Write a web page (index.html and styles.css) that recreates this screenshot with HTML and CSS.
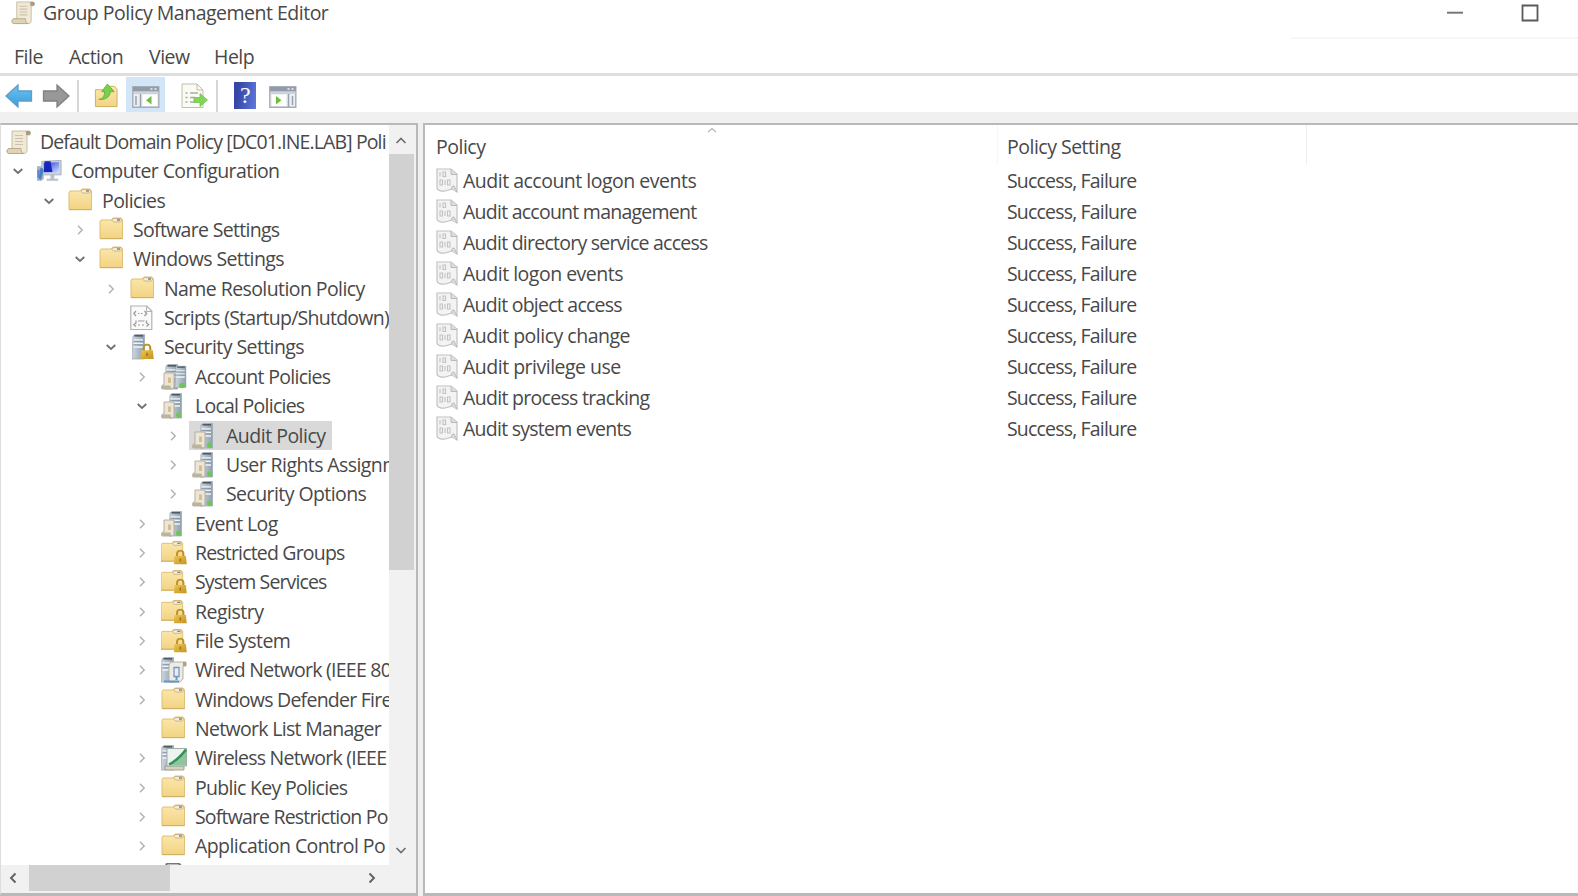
FILE: index.html
```html
<!DOCTYPE html>
<html lang="en">
<head>
<meta charset="utf-8">
<title>Group Policy Management Editor</title>
<link rel="stylesheet" href="styles.css">
</head>
<body>
<svg class="defs" aria-hidden="true">
  <defs>
    <linearGradient id="gFolder" x1="0" y1="0" x2="0" y2="1"><stop offset="0" stop-color="#fbe8ae"/><stop offset="1" stop-color="#f2d382"/></linearGradient>
    <linearGradient id="gServer" x1="0" y1="0" x2="1" y2="0"><stop offset="0" stop-color="#ced7df"/><stop offset="1" stop-color="#8d9fae"/></linearGradient>
    <linearGradient id="gLock" x1="0" y1="0" x2="1" y2="1"><stop offset="0" stop-color="#ecc552"/><stop offset="1" stop-color="#c4921c"/></linearGradient>
    <linearGradient id="gBlue" x1="0" y1="0" x2="0" y2="1"><stop offset="0" stop-color="#6cc3f3"/><stop offset="1" stop-color="#3a9cdb"/></linearGradient>
    <linearGradient id="gScreen" x1="0" y1="0" x2="1" y2="1"><stop offset="0" stop-color="#2236d2"/><stop offset="1" stop-color="#cfe0ff"/></linearGradient>
  </defs>
  <symbol id="scroll" viewBox="0 0 26 26">
    <path d="M6 2h17c2 0 2 4 0 4h-2v15c0 3-2 3.500-3 3.500H3c-3 0-2-5 0-5h3z" fill="#f0e9d6" stroke="#c8bea5"/>
    <path d="M3 19.500h12c0 3 1 5 3 5H3c-3 0-2-5 0-5z" fill="#e0d4b5" stroke="#b8ab8b"/>
    <path d="M20 2h3c2 0 2 4 0 4h-3z" fill="#a79c84"/>
    <path d="M9 6.500h8M9 9.500h8M9 12.500h8M9 15.500h8" stroke="#c9c2b2" stroke-width="1.200"/>
  </symbol>
  <symbol id="folder" viewBox="0 0 26 26">
    <path d="M1 4.500l1-1.500h10l2-2h8l1.500 2v18.500H1z" fill="url(#gFolder)" stroke="#dfc074"/>
    <path d="M13 3.500l1.500-2h7l1 2-1 1.500h-7z" fill="#f5eddb" stroke="#bfa878" stroke-width=".8"/>
    <path d="M18 3h3" stroke="#8d8068" stroke-width="1.500"/>
    <path d="M1 21.600h22.500" stroke="#cfb067" stroke-width="1.200"/>
  </symbol>
  <symbol id="lock" viewBox="0 0 13 15">
    <path d="M3.300 7V4.200a3.200 3.200 0 0 1 6.400 0V7" fill="none" stroke="#bd9029" stroke-width="2"/>
    <path d="M.8 6.500h11.400l.8 8.500H0z" fill="url(#gLock)"/>
    <path d="M6.500 9v3" stroke="#8e650e" stroke-width="1.200"/>
  </symbol>
  <symbol id="folderlock" viewBox="0 0 27 26">
    <use href="#folder" width="26" height="26" x="-1"/>
    <use href="#lock" x="13" y="9.500" width="14" height="15.500"/>
  </symbol>
  <symbol id="tower" viewBox="0 0 13 26">
    <path d="M1 2l2-1.500h9.500V25H0z" fill="url(#gServer)" stroke="#98a5b1" stroke-width=".7"/>
    <path d="M2.500 1.800h8.500" stroke="#4b555e" stroke-width="1.500"/>
    <path d="M1.500 6h9.500M1.500 9.500h9.500M1.500 13h9.500" stroke="#eef4f8" stroke-width="1.500"/>
    <path d="M1.500 7.300h9.500M1.500 10.800h9.500" stroke="#7a8c9b" stroke-width=".8"/>
  </symbol>
  <symbol id="serverlock" viewBox="0 0 26 26">
    <use href="#tower" x="2" y="0" width="13" height="26"/>
    <use href="#lock" x="10" y="9.500" width="14" height="15.500"/>
  </symbol>
  <symbol id="miniscroll" viewBox="0 0 16 18">
    <path d="M3 1h10v13c0 2-1 3-2.500 3H1.500c-2 0-1-4 .5-4h1z" fill="#ece6d6" stroke="#b3aa98" stroke-width=".9"/>
    <path d="M1.500 13.500h8c0 2 1 3.500 2 3.500H2c-2 0-1.500-3.500-.5-3.500z" fill="#bcb39c"/>
    <path d="M7 5.500h3V11H7z" fill="#d6bd92"/>
  </symbol>
  <symbol id="server" viewBox="0 0 26 26">
    <use href="#tower" x="8" y="0" width="13" height="26"/>
    <use href="#miniscroll" x="0" y="8" width="16" height="18"/>
    <circle cx="17.500" cy="22" r="2.500" fill="#6cc84f"/>
  </symbol>
  <symbol id="servers" viewBox="0 0 26 26">
    <use href="#tower" x="4" y="0" width="13" height="26"/>
    <use href="#tower" x="14" y="1.500" width="11.500" height="23"/>
    <use href="#miniscroll" x="0" y="8" width="16" height="18"/>
    <circle cx="21" cy="21.500" r="2.700" fill="#6cc84f"/>
  </symbol>
  <symbol id="computer" viewBox="0 0 27 26">
    <path d="M0 8h5l2 1v12l-2 2H0z" fill="#a3b2c6"/>
    <path d="M1.500 12v8" stroke="#5b83cf" stroke-width="2"/>
    <path d="M5 3l20-1v15H5z" fill="#cdd3dc" stroke="#a9b0bb"/>
    <path d="M7 4.500l16-.5v10.500H7z" fill="url(#gScreen)"/>
    <path d="M8 3h6l2 11H7z" fill="#1724bd"/>
    <path d="M3 11c3-3 5 1 3 5l-2 6-2-1z" fill="#4a80c0"/>
    <path d="M14 17h4v4h4v2H10v-2h4z" fill="#b9c0c9"/>
  </symbol>
  <symbol id="script" viewBox="0 0 26 26">
    <path d="M.8 1h16l5 5v18.500H.8z" fill="#fafafa" stroke="#b2b2b2" stroke-width="1.200"/>
    <path d="M16.500 1v5.500H22" fill="none" stroke="#b2b2b2"/>
    <path d="M6 6L3.800 8.500 6 11M14.500 6l2.200 2.500-2.200 2.500M8 8.500h1.500M11 8.500h1.500M6 15.500v2.500l-2.200 1.500L6 21.500M16.500 15.500v2.500l2.200 1.500-2.200 2M8 16h6.500M8 20h2M12 20h2" fill="none" stroke="#999" stroke-width="1.200"/>
  </symbol>
  <symbol id="wired" viewBox="0 0 26 26">
    <use href="#tower" x="0" y="0" width="13" height="26"/>
    <path d="M10 5h15v4h-3v13l-3 3H8V8z" fill="#eeece0" stroke="#b0b2aa"/>
    <path d="M22 5h3v4h-3z" fill="#b6a06a"/>
    <path d="M13 10.500h5v9h-5z" fill="#e5eefa" stroke="#7b94bd" stroke-width="1.300"/>
    <path d="M15.500 20v3M3 24.500h15" stroke="#5d9ac8" stroke-width="2"/>
  </symbol>
  <symbol id="wireless" viewBox="0 0 26 26">
    <use href="#tower" x="0" y="0" width="13" height="26"/>
    <path d="M4 21h19v4H4z" fill="#d9d3bc" stroke="#96968b" stroke-width=".8"/>
    <path d="M6 3.500h19.500V21H6z" fill="#edf4ef" stroke="#9fada5"/>
    <path d="M8 20.500c6-3 12-8 17-16v16z" fill="#8cc69d"/>
    <path d="M8 19.500c6-3 11-7 17-15" fill="none" stroke="#35905a" stroke-width="2.500"/>
  </symbol>
  <symbol id="policy" viewBox="0 0 22 25">
    <path d="M1 1h14l6 5v18l-5-3-5 1.500c-4 1.500-10 .5-10-3z" fill="#f3f3f3" stroke="#c2c2c2" stroke-width="1.200"/>
    <path d="M15 1v5.500h6M16 21c-1-2 0-3 2-3l3 6" fill="#ddd" stroke="#b9b9b9"/>
    <path d="M4 4v4.500M7 4h2.500v4.500H7zM4 12h2.500v5H4zM9 12v5M11.500 12H14v5h-2.500z" fill="none" stroke="#c2c2c2" stroke-width="1.100"/>
  </symbol>
  <symbol id="down" viewBox="0 0 12 12"><path d="M1.700 4L6 8l4.300-4" fill="none" stroke="#707070" stroke-width="1.800"/></symbol>
  <symbol id="right" viewBox="0 0 12 12"><path d="M4 1.700L8.200 6 4 10.300" fill="none" stroke="#b0b0b0" stroke-width="1.400"/></symbol>
  <symbol id="arrow" viewBox="0 0 28 24"><path d="M1 12L13 1v6h13.500v10H13v6z" stroke-width="1.300"/></symbol>
  <symbol id="pane" viewBox="0 0 28 22">
    <path d="M.8.8h26v20.500H.8z" fill="#eceff3" stroke="#a6adb6" stroke-width="1.400"/>
    <path d="M1 1h25.600v4.500H1z" fill="#929baa"/>
    <path d="M18.500 3h2M22.500 3h2" stroke="#f4f4f4" stroke-width="1.500"/>
    <path d="M1 7h26" stroke="#c4cad3" stroke-width="1.500"/>
  </symbol>
</svg>

<header class="titlebar">
  <svg class="app-icon"><use href="#scroll"/></svg>
  <h1 class="title">Group Policy Management Editor</h1>
  <div class="window-buttons">
    <svg width="16" height="18" viewBox="0 0 16 18"><path d="M0 8.700h16" stroke="#777" stroke-width="2"/></svg>
    <svg width="18" height="18" viewBox="0 0 18 18"><path d="M1.500 1.500h15v15h-15z" fill="none" stroke="#5a5a5a" stroke-width="1.800"/></svg>
  </div>
</header>
<nav class="menubar"><span class="m-file">File</span><span class="m-action">Action</span><span class="m-view">View</span><span class="m-help">Help</span></nav>
<div class="toolbar">
  <svg class="nav-back" fill="url(#gBlue)" stroke="#5f9dc6"><use href="#arrow"/></svg>
  <svg class="nav-next" fill="#989898" stroke="#808080"><use href="#arrow"/></svg>
  <i class="sep"></i>
  <svg class="tool-up" viewBox="0 0 26 26">
    <path d="M1.500 7h9l2-3.500h9l2.500 3.500v17.500H1.500z" fill="url(#gFolder)" stroke="#cfae62"/>
    <path d="M5 17c5-1 6-4 6-8H8l6-8 7 8h-4c0 5-5 9-12 8z" fill="#7bd04b" stroke="#63ae42" stroke-width=".9"/>
  </svg>
  <span class="tool-active">
    <svg width="28" height="22" viewBox="0 0 28 22"><use href="#pane"/><path d="M4 10v9M8.500 8v13" stroke="#9aa2b0" stroke-width="1.500"/><path d="M11 9h14v11H11z" fill="#fff"/><path d="M19.500 10v8.500L14 14.200z" fill="#6abf3f"/></svg>
  </span>
  <svg class="tool-export" viewBox="0 0 28 26">
    <path d="M1 1h15l6 6v17.500H1z" fill="#fbfaf3" stroke="#c0beb0"/>
    <path d="M16 1v6h6" fill="none" stroke="#c0beb0"/>
    <path d="M4.500 10h2M9 10h8M4.500 14.500h2M9 14.500h5M4.500 19h2M9 19h5" stroke="#aaa" stroke-width="1.300"/>
    <path d="M13 14.500h6v-4l7.500 6.500-7.500 6.500v-4h-6z" fill="#83d458" stroke="#74c24f" stroke-width=".8"/>
  </svg>
  <i class="sep sep-2"></i>
  <span class="tool-help">?</span>
  <svg class="tool-pane" viewBox="0 0 28 22"><use href="#pane"/><path d="M19.500 8v13M23.500 10v9" stroke="#9aa2b0" stroke-width="1.500"/><path d="M3 9h14v11H3z" fill="#fff"/><path d="M7 10v8.500l5.500-4.300z" fill="#6abf3f"/></svg>
</div>
<main class="workspace">
  <section class="tree-pane">
    <div class="tree-body">
      <div class="tree">
        <div class="node root t5"><svg class="ico"><use href="#scroll"/></svg><span>Default Domain Policy [DC01.INE.LAB] Poli</span></div>
        <div class="node l1 t1"><svg class="chev"><use href="#down"/></svg><svg class="ico"><use href="#computer"/></svg><span>Computer Configuration</span></div>
        <div class="node l2 t1"><svg class="chev"><use href="#down"/></svg><svg class="ico"><use href="#folder"/></svg><span>Policies</span></div>
        <div class="node l3 t2"><svg class="chev"><use href="#right"/></svg><svg class="ico"><use href="#folder"/></svg><span>Software Settings</span></div>
        <div class="node l3 t1"><svg class="chev"><use href="#down"/></svg><svg class="ico"><use href="#folder"/></svg><span>Windows Settings</span></div>
        <div class="node l4 t1"><svg class="chev"><use href="#right"/></svg><svg class="ico"><use href="#folder"/></svg><span>Name Resolution Policy</span></div>
        <div class="node l4 t3"><i class="chev"></i><svg class="ico"><use href="#script"/></svg><span>Scripts (Startup/Shutdown)</span></div>
        <div class="node l4 t1"><svg class="chev"><use href="#down"/></svg><svg class="ico"><use href="#serverlock"/></svg><span>Security Settings</span></div>
        <div class="node l5 t2"><svg class="chev"><use href="#right"/></svg><svg class="ico"><use href="#servers"/></svg><span>Account Policies</span></div>
        <div class="node l5 t3"><svg class="chev"><use href="#down"/></svg><svg class="ico"><use href="#server"/></svg><span>Local Policies</span></div>
        <div class="node l6 selected"><svg class="chev"><use href="#right"/></svg><svg class="ico"><use href="#server"/></svg><span>Audit Policy</span></div>
        <div class="node l6 t1"><svg class="chev"><use href="#right"/></svg><svg class="ico"><use href="#server"/></svg><span>User Rights Assignment</span></div>
        <div class="node l6 t1"><svg class="chev"><use href="#right"/></svg><svg class="ico"><use href="#server"/></svg><span>Security Options</span></div>
        <div class="node l5 t1"><svg class="chev"><use href="#right"/></svg><svg class="ico"><use href="#server"/></svg><span>Event Log</span></div>
        <div class="node l5 t4"><svg class="chev"><use href="#right"/></svg><svg class="ico"><use href="#folderlock"/></svg><span>Restricted Groups</span></div>
        <div class="node l5 t5"><svg class="chev"><use href="#right"/></svg><svg class="ico"><use href="#folderlock"/></svg><span>System Services</span></div>
        <div class="node l5"><svg class="chev"><use href="#right"/></svg><svg class="ico"><use href="#folderlock"/></svg><span>Registry</span></div>
        <div class="node l5 t1"><svg class="chev"><use href="#right"/></svg><svg class="ico"><use href="#folderlock"/></svg><span>File System</span></div>
        <div class="node l5 t3"><svg class="chev"><use href="#right"/></svg><svg class="ico"><use href="#wired"/></svg><span>Wired Network (IEEE 80</span></div>
        <div class="node l5 t3"><svg class="chev"><use href="#right"/></svg><svg class="ico"><use href="#folder"/></svg><span>Windows Defender Fire</span></div>
        <div class="node l5 t2"><i class="chev"></i><svg class="ico"><use href="#folder"/></svg><span>Network List Manager</span></div>
        <div class="node l5 t3"><svg class="chev"><use href="#right"/></svg><svg class="ico"><use href="#wireless"/></svg><span>Wireless Network (IEEE</span></div>
        <div class="node l5 t2"><svg class="chev"><use href="#right"/></svg><svg class="ico"><use href="#folder"/></svg><span>Public Key Policies</span></div>
        <div class="node l5 t4"><svg class="chev"><use href="#right"/></svg><svg class="ico"><use href="#folder"/></svg><span>Software Restriction Po</span></div>
        <div class="node l5 t1"><svg class="chev"><use href="#right"/></svg><svg class="ico"><use href="#folder"/></svg><span>Application Control Po</span></div>
        <div class="node l5"><i class="chev"></i><svg class="ico" viewBox="0 0 26 26"><path d="M5 9V3q0-2.500 2-2.500h10q2 0 3 3v4" fill="none" stroke="#777" stroke-width="1.800"/></svg></div>
      </div>
      <div class="vscroll">
        <svg class="vup" viewBox="0 0 12 12"><path d="M1.500 8L6 3.500 10.500 8" fill="none" stroke="#707070" stroke-width="1.700"/></svg>
        <div class="vthumb"></div>
        <svg class="vdown" viewBox="0 0 12 12"><path d="M1.500 4L6 8.500 10.500 4" fill="none" stroke="#707070" stroke-width="1.700"/></svg>
      </div>
    </div>
    <div class="hscroll">
      <svg class="hleft" viewBox="0 0 12 12"><path d="M8.500 1.500L4 6l4.500 4.500" fill="none" stroke="#606060" stroke-width="1.900"/></svg>
      <div class="hthumb"></div>
      <svg class="hright" viewBox="0 0 12 12"><path d="M3.500 1.500L8 6l-4.500 4.500" fill="none" stroke="#606060" stroke-width="1.900"/></svg>
    </div>
  </section>
  <section class="list-pane">
    <div class="list-head">
      <div class="col-name">Policy<svg class="sort" viewBox="0 0 10 6"><path d="M1 5l4-3.500L9 5" fill="none" stroke="#b5b5b5" stroke-width="1.100"/></svg></div>
      <div class="col-setting">Policy Setting</div>
    </div>
    <div class="item"><svg><use href="#policy"/></svg><span class="name">Audit account logon events</span><span class="t4">Success, Failure</span></div>
    <div class="item"><svg><use href="#policy"/></svg><span class="name t3">Audit account management</span><span class="t4">Success, Failure</span></div>
    <div class="item"><svg><use href="#policy"/></svg><span class="name t3">Audit directory service access</span><span class="t4">Success, Failure</span></div>
    <div class="item"><svg><use href="#policy"/></svg><span class="name">Audit logon events</span><span class="t4">Success, Failure</span></div>
    <div class="item"><svg><use href="#policy"/></svg><span class="name t3">Audit object access</span><span class="t4">Success, Failure</span></div>
    <div class="item"><svg><use href="#policy"/></svg><span class="name">Audit policy change</span><span class="t4">Success, Failure</span></div>
    <div class="item"><svg><use href="#policy"/></svg><span class="name">Audit privilege use</span><span class="t4">Success, Failure</span></div>
    <div class="item"><svg><use href="#policy"/></svg><span class="name t2">Audit process tracking</span><span class="t4">Success, Failure</span></div>
    <div class="item"><svg><use href="#policy"/></svg><span class="name t3">Audit system events</span><span class="t4">Success, Failure</span></div>
  </section>
</main>
</body>
</html>
```
FILE: styles.css
```css
* { box-sizing: border-box; }
body {
  margin: 0;
  width: 1578px;
  height: 896px;
  overflow: hidden;
  display: flex;
  flex-direction: column;
  background: #fff;
  color: #484848;
  font: 19.5px/28px "Open Sans", "Noto Sans", sans-serif;
  letter-spacing: -0.5px;
}
svg { display: block; flex: none; }
.defs { position: absolute; width: 0; height: 0; }

/* text tightness steps */
.t1 { letter-spacing: -0.58px; }
.t2 { letter-spacing: -0.69px; }
.t3 { letter-spacing: -0.75px; }
.t4 { letter-spacing: -0.82px; }
.t5 { letter-spacing: -0.88px; }

.titlebar { height: 39px; flex: none; display: flex; align-items: flex-start; padding-left: 11px; }
.app-icon { width: 25px; height: 25px; }
.title { margin: -1px 0 0 7px; font-size: 19.5px; font-weight: 400; }
.window-buttons { margin-left: auto; width: 287px; height: 39px; display: flex; gap: 58px; padding: 4px 0 0 156px; border-bottom: 2px solid #f7f7f7; }

.menubar { height: 37px; flex: none; display: flex; padding: 4px 0 0 14px; border-bottom: 3px solid #dedede; }
.m-file { width: 55px; }
.m-action { width: 80px; }
.m-view { width: 65px; }

.toolbar { height: 36px; flex: none; display: flex; align-items: center; padding: 3px 0 0 5px; }
.nav-back { width: 28px; height: 24px; }
.nav-next { width: 28px; height: 24px; margin-left: 9px; transform: scaleX(-1); }
.sep { width: 2px; height: 32px; margin-left: 7px; background: #d6d6d6; }
.tool-up { width: 25px; height: 25px; margin-left: 15px; }
.tool-active { width: 39px; height: 35px; margin: -3px 0 0 7px; background: #d3e6f8; display: flex; align-items: center; justify-content: center; padding-top: 6px; }
.tool-export { width: 28px; height: 26px; margin-left: 16px; }
.sep-2 { margin-left: 7px; }
.tool-help { width: 22px; height: 27px; margin-left: 16px; background: linear-gradient(100deg, #3546a6 20%, #5f7bdd); color: #fff; font: 24px/26px "Liberation Serif", serif; text-align: center; }
.tool-pane { width: 28px; height: 22px; margin: 3px 0 0 13px; }

.workspace { flex: 1; min-height: 0; display: flex; gap: 5px; padding-top: 11px; background: #f0f0f0; }
.tree-pane { width: 418px; display: flex; flex-direction: column; background: #fff; border: solid #b9b9b9; border-width: 2px 2px 3px 0; border-left: 1px solid #ddd; }
.tree-body { flex: 1; min-height: 0; display: flex; }
.tree { width: 388px; overflow: hidden; padding-top: 2.4px; }
.node { height: 29.35px; display: flex; align-items: center; white-space: nowrap; }
.root { padding-left: 5px; }
.l2 { padding-left: 31px; }
.l3 { padding-left: 62px; }
.l4 { padding-left: 93px; }
.l5 { padding-left: 124px; }
.l6 { padding-left: 155px; }
.chev { width: 12px; height: 12px; flex: none; margin: 0 18px 0 11px; }
.ico { width: 26px; height: 26px; margin-left: -5px; }
.root .ico { margin-left: 0; }
.node span { margin-left: 8px; }
.selected { width: 331px; background: linear-gradient(#d9d9d9, #d9d9d9) right / 143px 100% no-repeat; }
.vscroll { flex: 1; background: #f1f1f1; display: flex; flex-direction: column; align-items: flex-start; padding-bottom: 9px; }
.vup, .vdown { width: 12px; height: 12px; margin-left: 6px; }
.vup { margin-top: 10px; margin-bottom: 7px; }
.vthumb { width: 25px; height: 416px; background: #d1d1d1; }
.vdown { margin-top: auto; }
.hscroll { height: 28px; flex: none; background: #f1f1f1; display: flex; align-items: center; padding-bottom: 2px; }
.hleft, .hright { width: 12px; height: 12px; }
.hleft { margin-left: 6px; margin-right: 10px; }
.hthumb { width: 141px; height: 26px; background: #d1d1d1; }
.hright { margin-left: auto; margin-right: 38px; }

.list-pane { flex: 1; background: #fff; border: solid #b9b9b9; border-width: 2px 0 3px 2px; }
.list-head { height: 40px; display: flex; }
.col-name { position: relative; width: 573px; padding: 8px 0 0 11px; border-right: 1px solid #f7f7f7; }
.sort { position: absolute; left: 282px; top: 2px; width: 10px; height: 6px; }
.col-setting { width: 309px; padding: 8px 0 0 9px; border-right: 1px solid #eee; }
.item { height: 31px; display: flex; align-items: center; padding-left: 11px; }
.item svg { width: 22px; height: 25px; }
.item .name { width: 544px; margin-left: 5px; }
```
